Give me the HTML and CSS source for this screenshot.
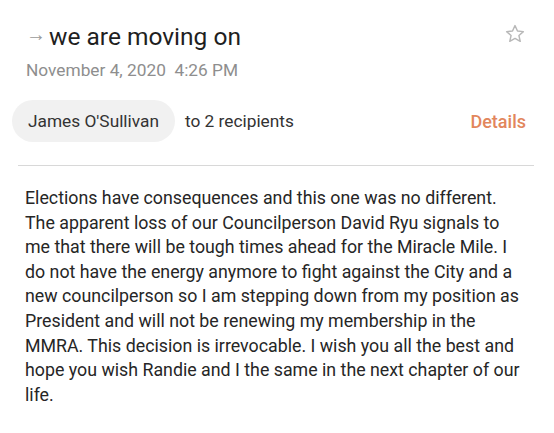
FILE: index.html
```html
<!DOCTYPE html>
<html>
<head>
<meta charset="utf-8">
<link rel="stylesheet" href="styles.css">
</head>
<body>
<div class="mail">
  <header class="head">
    <div class="titles">
      <h1 class="subject"><span class="arrow">&#8594;</span>we are moving on</h1>
      <div class="date">November 4, 2020&nbsp; 4:26 PM</div>
    </div>
    <svg class="star" width="22" height="22" viewBox="0 0 24 24"><path d="M12 2.8l2.7 5.9 6.4.7-4.8 4.3 1.4 6.3L12 16.8 6.3 20l1.4-6.3-4.8-4.3 6.4-.7z" fill="none" stroke="#b8b8b8" stroke-width="1.6" stroke-linejoin="round"/></svg>
  </header>
  <div class="meta">
    <span class="chip">James O'Sullivan</span>
    <span class="to">to 2 recipients</span>
    <span class="details">Details</span>
  </div>
  <div class="divider"></div>
  <p class="body">Elections have consequences and this one was no different.<br>The apparent loss of our Councilperson David Ryu signals to<br>me that there will be tough times ahead for the Miracle Mile. I<br>do not have the energy anymore to fight against the City and a<br>new councilperson so I am stepping down from my position as<br>President and will not be renewing my membership in the<br>MMRA. This decision is irrevocable. I wish you all the best and<br>hope you wish Randie and I the same in the next chapter of our<br>life.</p>
</div>
</body>
</html>
```

FILE: styles.css
```css
* { box-sizing: border-box; }
html, body { margin: 0; padding: 0; background: #fff; }
body { font-family: Roboto, "Noto Sans", sans-serif; color: #2b2b2b; }
.mail { width: 554px; height: 433px; }
.head { display: flex; justify-content: space-between; align-items: flex-start; padding: 21px 28px 0 26px; }
.subject { margin: 0; font-size: 24.5px; font-weight: 400; color: #1f1f1f; line-height: 32px; display: flex; align-items: center; }
.arrow { color: #9a9a9a; font-size: 20px; margin-right: 3px; position: relative; top: -3px; }
.date { margin-top: 6px; font-size: 17.3px; color: #8e8e8e; line-height: 22px; }
.star { margin-top: 2px; }
.meta { display: flex; align-items: center; margin-top: 19px; padding: 0 28px 0 12px; height: 42px; }
.chip { background: #f1f1f1; border-radius: 21px; height: 42px; display: flex; align-items: center; padding: 0 16px; font-size: 17.3px; color: #333; }
.to { margin-left: 10px; font-size: 17.3px; color: #333; }
.details { margin-left: auto; font-size: 18px; color: #e2865c; font-weight: 500; }
.divider { margin: 23px 20px 0 18px; border-top: 1px solid #d8d8d8; }
.body { margin: 20px 0 0 0; padding: 0 0 0 25px; font-size: 17.8px; line-height: 24.6px; color: #262626; white-space: nowrap; }
```
